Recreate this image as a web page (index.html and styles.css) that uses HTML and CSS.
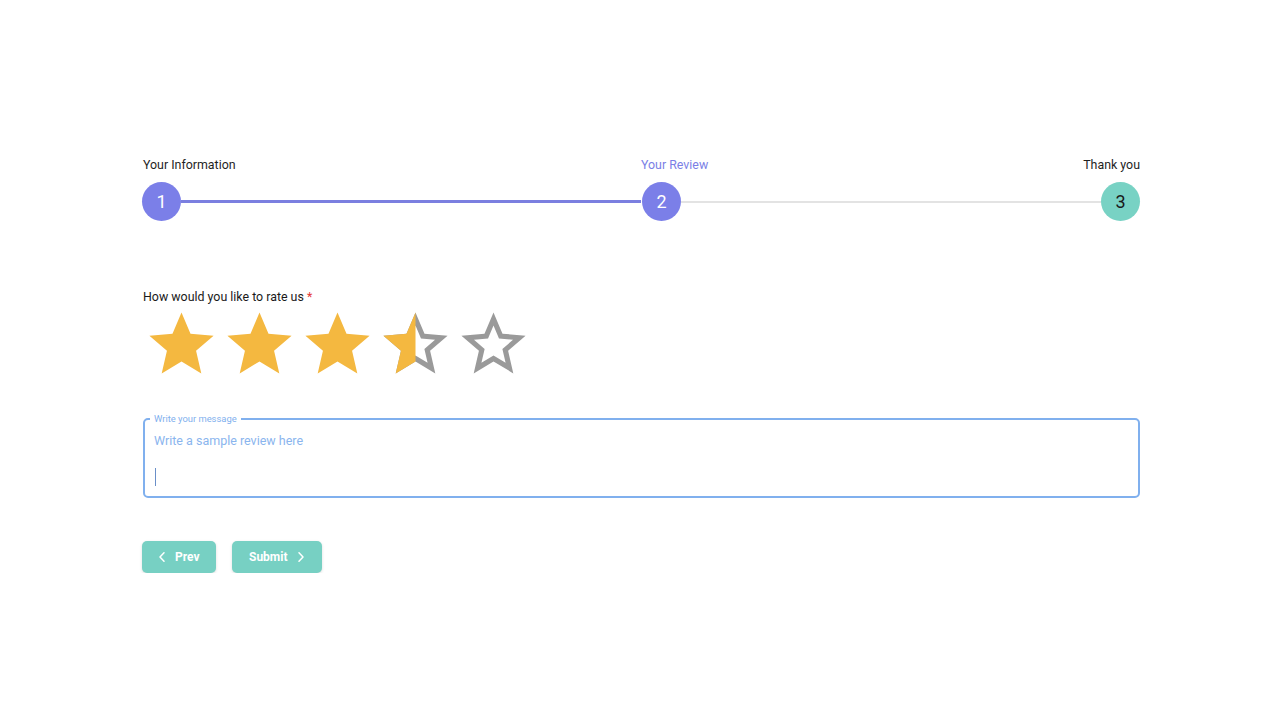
FILE: index.html
```html
<!DOCTYPE html>
<html lang="en">
<head>
<meta charset="utf-8">
<title>Review</title>
<link rel="stylesheet" href="styles.css">
</head>
<body>
<main class="wrap">
  <section class="stepper">
    <div class="labels">
      <span class="lbl lbl-1">Your Information</span>
      <span class="lbl lbl-2 active">Your Review</span>
      <span class="lbl lbl-3">Thank you</span>
    </div>
    <div class="track">
      <div class="seg">
        <span class="dot done">1</span>
        <span class="line line-done"></span>
      </div>
      <div class="seg">
        <span class="dot done">2</span>
        <span class="line"></span>
        <span class="dot next">3</span>
      </div>
    </div>
  </section>

  <section class="rating">
    <p class="q">How would you like to rate us <span class="req">*</span></p>
    <div class="stars">
      <svg class="star" viewBox="0 0 24 24"><path class="fill" d="M12 17.27L18.18 21l-1.64-7.03L22 9.24l-7.19-.61L12 2 9.19 8.63 2 9.24l5.46 4.73L5.82 21z"/></svg>
      <svg class="star" viewBox="0 0 24 24"><path class="fill" d="M12 17.27L18.18 21l-1.64-7.03L22 9.24l-7.19-.61L12 2 9.19 8.63 2 9.24l5.46 4.73L5.82 21z"/></svg>
      <svg class="star" viewBox="0 0 24 24"><path class="fill" d="M12 17.27L18.18 21l-1.64-7.03L22 9.24l-7.19-.61L12 2 9.19 8.63 2 9.24l5.46 4.73L5.82 21z"/></svg>
      <svg class="star" viewBox="0 0 24 24">
        <defs><clipPath id="half"><rect x="0" y="0" width="12" height="24"/></clipPath></defs>
        <path class="empty" d="M22 9.24l-7.19-.62L12 2 9.19 8.63 2 9.24l5.46 4.73L5.82 21 12 17.27 18.18 21l-1.63-7.03L22 9.24zM12 15.4l-3.76 2.27 1-4.28-3.32-2.88 4.38-.38L12 6.1l1.71 4.04 4.38.38-3.32 2.88 1 4.28L12 15.4z"/>
        <path class="fill" clip-path="url(#half)" d="M12 17.27L18.18 21l-1.64-7.03L22 9.24l-7.19-.61L12 2 9.19 8.63 2 9.24l5.46 4.73L5.82 21z"/>
      </svg>
      <svg class="star" viewBox="0 0 24 24"><path class="empty" d="M22 9.24l-7.19-.62L12 2 9.19 8.63 2 9.24l5.46 4.73L5.82 21 12 17.27 18.18 21l-1.63-7.03L22 9.24zM12 15.4l-3.76 2.27 1-4.28-3.32-2.88 4.38-.38L12 6.1l1.71 4.04 4.38.38-3.32 2.88 1 4.28L12 15.4z"/></svg>
    </div>
  </section>

  <fieldset class="field">
    <legend>Write your message</legend>
    <div class="placeholder">Write a sample review here</div>
    <div class="caret"></div>
  </fieldset>

  <div class="actions">
    <button class="btn btn-prev">
      <svg class="chev" viewBox="0 0 6 10"><path d="M5 0.8L1 5l4 4.2"/></svg>
      Prev
    </button>
    <button class="btn btn-submit">
      Submit
      <svg class="chev" viewBox="0 0 6 10"><path d="M1 0.8L5 5 1 9.2"/></svg>
    </button>
  </div>
</main>
</body>
</html>
```

FILE: styles.css
```css
* { box-sizing: border-box; }
html, body { margin: 0; background: #fff; }
body {
  font-family: Roboto, "Noto Sans", "Liberation Sans", sans-serif;
  color: #1f1f1f;
}
.wrap {
  width: 998px;
  margin-left: 142px;
  padding-top: 157px;
}

/* Stepper */
.labels {
  display: grid;
  grid-template-columns: 1fr 1fr;
  font-size: 12.4px;
  line-height: 16px;
  height: 16px;
}
.lbl-1 { grid-column: 1; grid-row: 1; padding-left: 1px; }
.lbl-2 { grid-column: 2; grid-row: 1; justify-self: start; }
.lbl-3 { grid-column: 2; grid-row: 1; justify-self: end; }
.lbl.active { color: #7b7fe6; }

.track {
  display: grid;
  grid-template-columns: 1fr 1fr;
  margin-top: 9px;
}
.seg {
  display: flex;
  align-items: center;
}
.dot {
  width: 39px;
  height: 39px;
  flex: none;
  border-radius: 50%;
  display: flex;
  align-items: center;
  justify-content: center;
  font-size: 18px;
  color: #fff;
}
.seg + .seg .dot.done { margin-left: 1px; }
.dot.done { background: #7b7fe8; }
.dot.next { background: #78d2c4; color: #1a1a1a; }
.line {
  flex: 1;
  height: 2px;
  background: #e3e3e3;
}
.line-done {
  height: 3px;
  background: #7b7fe0;
}

/* Rating */
.rating { margin-top: 68px; }
.q {
  margin: 0 0 0 1px;
  font-size: 12.4px;
  line-height: 16px;
  color: #1a1a1a;
}
.req { color: #e53935; }
.stars {
  display: flex;
  gap: 1px;
  margin-top: 1px;
  margin-left: 1px;
}
.star {
  width: 77px;
  height: 77px;
  display: block;
}
.star .fill { fill: #f4b840; }
.star .empty { fill: #9a9a9a; }

/* Message field */
.field {
  margin: 31px 0 0 1px;
  padding: 0 10px 10px;
  border: 2px solid #80b0ee;
  border-radius: 5px;
  height: 84px;
}
.field legend {
  padding: 0 4px;
  margin-left: -5px;
  font-size: 9.4px;
  line-height: 10px;
  color: #7fb0ee;
}
.placeholder {
  font-size: 12.5px;
  line-height: 16px;
  color: #8ab5ee;
  margin-top: 9px;
  margin-left: -1px;
}
.caret {
  width: 1px;
  height: 18px;
  background: #6a8fc8;
  margin-top: 19px;
}

/* Buttons */
.actions {
  display: flex;
  gap: 16px;
  margin-top: 43px;
}
.btn {
  height: 32px;
  border: none;
  border-radius: 5px;
  background: #77d0c3;
  color: #fff;
  font-family: Roboto, "Noto Sans", "Liberation Sans", sans-serif;
  font-weight: 700;
  font-size: 12px;
  display: flex;
  align-items: center;
  box-shadow: 0 1px 3px rgba(0,0,0,0.14);
  cursor: pointer;
}
.btn-prev { width: 74px; padding: 0 0 0 17px; gap: 10px; }
.btn-submit { width: 90px; padding: 0 0 0 17px; gap: 10px; }
.chev {
  width: 6px;
  height: 10px;
  fill: none;
  stroke: #fff;
  stroke-width: 1.5;
  stroke-linecap: round;
  stroke-linejoin: round;
}
```
